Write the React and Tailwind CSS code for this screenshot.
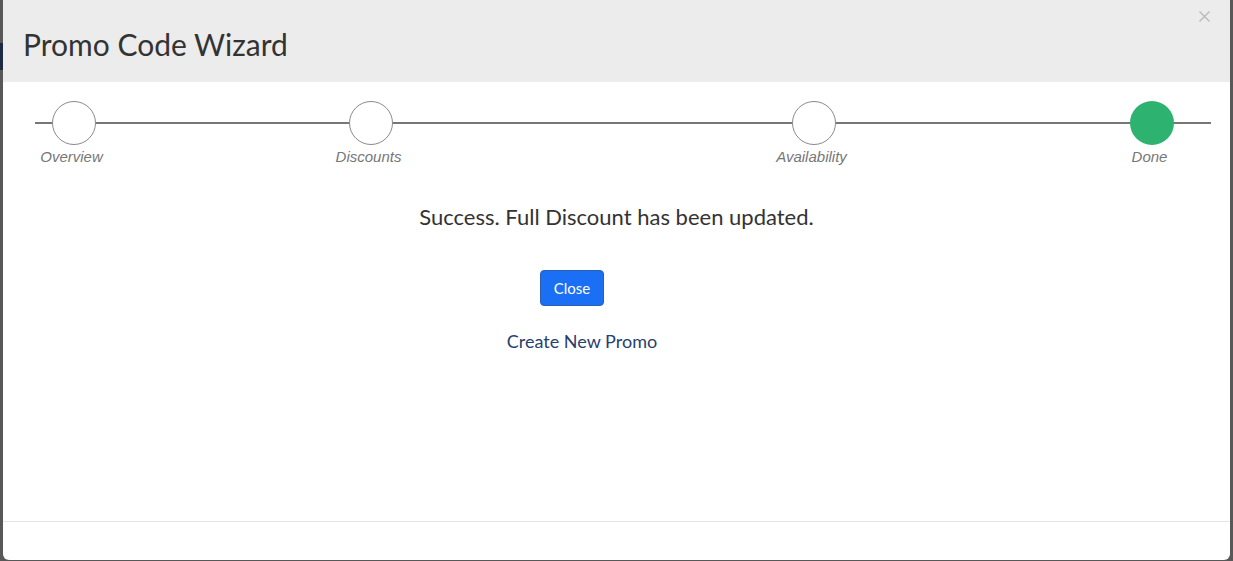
import React from "react";

const steps = [
  { label: "Overview", ml: "ml-0", done: false },
  { label: "Discounts", ml: "ml-[217px]", done: false },
  { label: "Availability", ml: "ml-[363px]", done: false },
  { label: "Done", ml: "ml-[258px]", done: true },
];

const Step = ({ label, ml, done }) => (
  <div className={`${ml} w-[80px] flex flex-col items-center relative`}>
    <div
      className={
        done
          ? "w-[44px] h-[44px] rounded-full bg-[#2db36f]"
          : "w-[44px] h-[44px] rounded-full bg-white border border-[#8a8a8a]"
      }
    />
    <div className="mt-[3px] -ml-[5px] text-[15px] leading-[17px] italic text-[#777] font-['Liberation_Sans',Arial,sans-serif]">
      {label}
    </div>
  </div>
);

export default function App() {
  return (
    <div className="w-[1233px] h-[561px] bg-[#585858] flex overflow-hidden font-['Lato',sans-serif]">
      {/* dimmed page behind the modal */}
      <div className="w-[3px] flex flex-col">
        <div className="h-[43px]" />
        <div className="h-[27px] bg-[#1d2a3f]" />
      </div>

      <div className="w-[1227px] h-[560px] bg-white rounded-b-[6px] flex flex-col">
        <div className="h-[82px] bg-[#ececec] flex items-start justify-between pl-[20px] pr-[20px]">
          <h4 className="mt-[26px] text-[30px] leading-[36px] text-[#333]">Promo Code Wizard</h4>
          <button className="mt-[10px] w-[12px] h-[12px] flex items-center justify-center">
            <svg width="11" height="11" viewBox="0 0 11 11">
              <path d="M0.5 0.5 L10.5 10.5 M10.5 0.5 L0.5 10.5" stroke="#b8b8b8" strokeWidth="1.3" />
            </svg>
          </button>
        </div>

        <div className="flex-1 flex flex-col">
          <div className="mt-[19px] ml-[32px] w-[1176px] relative">
            <div className="absolute left-0 right-0 top-[21px] h-[2px] bg-[#777]" />
            <div className="flex -ml-[1px]">
              {steps.map((s) => (
                <Step key={s.label} {...s} />
              ))}
            </div>
          </div>

          <div className="mt-[38px] flex flex-col items-center">
            <p className="text-[22px] leading-[28px] text-[#333]">Success. Full Discount has been updated.</p>
            <button className="mt-[39px] mr-[89px] w-[64px] h-[36px] rounded-[4px] bg-[#1a6ff4] border border-[#2b5fb0] text-white text-[15px] leading-[20px]">
              Close
            </button>
            <a className="mt-[24px] mr-[69px] text-[18px] leading-[22px] text-[#27406f]">Create New Promo</a>
          </div>
        </div>

        <div className="h-[39px] border-t border-[#e5e5e5]" />
      </div>
    </div>
  );
}
